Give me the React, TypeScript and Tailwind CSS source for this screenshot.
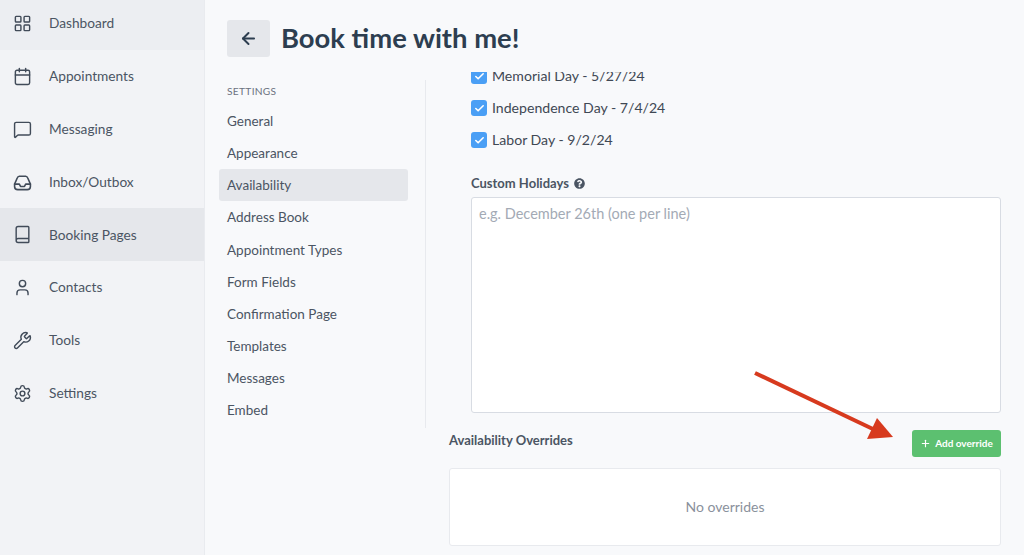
import { ArrowLeft, Book, Calendar, Check, LayoutGrid, MessageSquare, Plus, Settings, User, Wrench } from "lucide-react";
import { FaQuestionCircle } from "react-icons/fa";

const nav = [
  { label: "Dashboard", icon: LayoutGrid, cls: "bg-[#eceef2]" },
  { label: "Appointments", icon: Calendar, cls: "" },
  { label: "Messaging", icon: MessageSquare, cls: "" },
  { label: "Inbox/Outbox", icon: null, cls: "" },
  { label: "Booking Pages", icon: Book, cls: "bg-[#e5e7eb]" },
  { label: "Contacts", icon: User, cls: "" },
  { label: "Tools", icon: Wrench, cls: "" },
  { label: "Settings", icon: Settings, cls: "" },
];

const settings = ["General", "Appearance", "Availability", "Address Book", "Appointment Types", "Form Fields", "Confirmation Page", "Templates", "Messages", "Embed"];

function InboxIcon() {
  return (
    <svg width="19" height="19" viewBox="0 0 24 24" fill="none" stroke="currentColor" strokeWidth="2" strokeLinecap="round" strokeLinejoin="round">
      <path d="M2 14v3a4 4 0 0 0 4 4h12a4 4 0 0 0 4-4v-3l-3.500-8A3 3 0 0 0 16 4H8a3 3 0 0 0-2.500 2z" />
      <path d="M2 14h6l1.500 3h5l1.500-3h6" />
    </svg>
  );
}

function Holiday({ label }: { label: string }) {
  return (
    <div className="flex h-[32px] items-center gap-[5px]">
      <span className="flex h-4 w-4 items-center justify-center rounded-[3px] bg-[#4a9ff5] text-white">
        <Check size={11} strokeWidth={3.5} />
      </span>
      <span className="text-[14.1px] text-[#3f4854]">{label}</span>
    </div>
  );
}

export default function App() {
  return (
    <div className="relative flex h-[555px] w-[1024px] overflow-hidden bg-[#f8f9fb] font-['Lato','Noto_Sans',sans-serif]">
      <aside className="-mt-[3px] w-[205px] shrink-0 border-r border-[#e9ebef] bg-[#f2f3f6]">
        {nav.map((n) => (
          <div key={n.label} className={`flex h-[52.86px] items-center gap-[17px] pl-[12px] text-[13.7px] text-[#4b5563] ${n.cls}`}>
            <span className="flex h-5 w-5 items-center justify-center text-[#414b59]">
              {n.icon ? <n.icon size={19} strokeWidth={1.8} /> : <InboxIcon />}
            </span>
            {n.label}
          </div>
        ))}
      </aside>

      <main className="flex min-w-0 flex-1 flex-col">
        <header className="flex items-center gap-[11px] pl-[22px] pt-5">
          <button className="flex h-[37px] w-[43px] items-center justify-center rounded-[3px] bg-[#e5e7eb] text-[#2d3e50]">
            <ArrowLeft size={19} strokeWidth={2.5} />
          </button>
          <h1 className="pb-[2px] text-[27.4px] font-bold leading-[35px] text-[#2d3e50]">Book time with me!</h1>
        </header>

        <div className="flex min-h-0 flex-1 pt-[15px]">
          <div className="mt-2 flex h-[348px] w-[221px] shrink-0 flex-col border-r border-[#e8eaee] pl-[14px] pr-[17px]">
            <div className="pb-[5.5px] pl-2 pt-[4px] text-[10.2px] tracking-[0.3px] text-[#6b7280]">SETTINGS</div>
            {settings.map((s) => (
              <div key={s} className={`flex h-[32.2px] shrink-0 items-center rounded-[3px] pl-2 text-[13.5px] text-[#4b5563] ${s === "Availability" ? "bg-[#e5e7eb]" : ""}`}>
                {s}
              </div>
            ))}
          </div>

          <div className="min-w-0 flex-1 overflow-hidden pl-[23px] pr-[23px]">
            <div className="pl-[22px]">
              <div className="-mt-[12px]">
                <Holiday label="Memorial Day - 5/27/24" />
                <Holiday label="Independence Day - 7/4/24" />
                <Holiday label="Labor Day - 9/2/24" />
              </div>
              <div className="mt-[18px] flex items-center gap-[5px] text-[13px] font-bold text-[#4b5563]">
                Custom Holidays <FaQuestionCircle size={11} />
              </div>
              <div className="mt-[3px] h-[216px] rounded-[3px] border border-[#d8dce3] bg-white px-[7px] pt-[5px] text-[14.5px] text-[#a3aab5]">
                e.g. December 26th (one per line)
              </div>
            </div>
            <div className="mt-[17px] flex items-start justify-between">
              <div className="pt-[1px] text-[13px] font-bold text-[#4b5563]">Availability Overrides</div>
              <button className="flex h-[27px] w-[89px] items-center justify-center gap-1 rounded-[3px] bg-[#5cc070] text-[10px] font-bold text-white">
                <Plus size={11} strokeWidth={2.5} /> Add override
              </button>
            </div>
            <div className="mt-[11px] flex h-[78px] items-center justify-center rounded-[3px] border border-[#e8eaee] bg-white text-[14px] text-[#8a919c]">
              No overrides
            </div>
          </div>
        </div>
      </main>

      <svg className="pointer-events-none absolute left-0 top-0" width="1024" height="555" viewBox="0 0 1024 555">
        <line x1="755" y1="373" x2="875" y2="430" stroke="#d73a1e" strokeWidth="4" />
        <polygon points="877,418 867,439 893,437" fill="#d73a1e" />
      </svg>
    </div>
  );
}
